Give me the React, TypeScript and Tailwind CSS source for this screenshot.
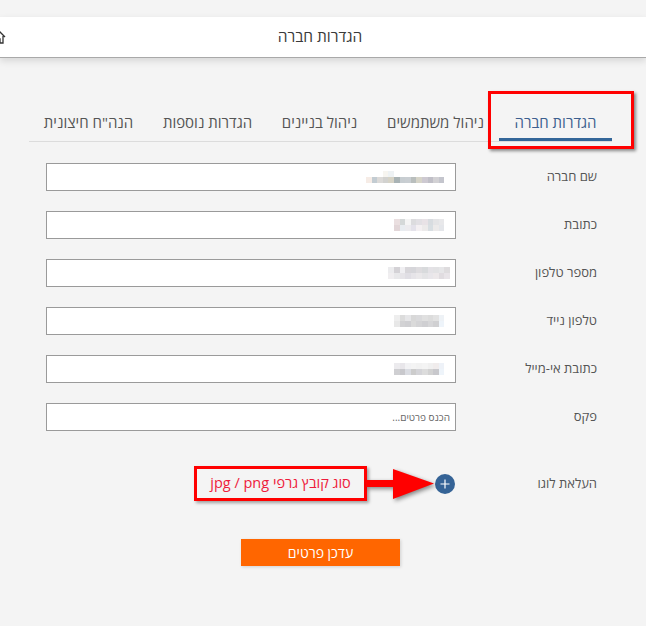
import React from "react";

const mosaics: { rows: string[][] }[] = [
  {
    rows: [
      ["transparent", "transparent", "transparent", "#f7f5f0", "#eef2f4", "transparent", "transparent", "transparent", "transparent", "transparent", "transparent", "transparent", "transparent", "transparent", "transparent"],
      ["#f6ece6", "#c3ccd2", "#dcdad8", "#d2d2d0", "#d6d3c6", "#a9b3b5", "#c7cdd1", "#c9ced2", "#b9bebd", "#d6d4c8", "#cdc9d1", "#c0bfc7", "#d2d1d4", "#c4c5cd", "transparent"],
    ],
  },
  {
    rows: [
      ["#eadfe0", "#d4d8d8", "#f4f4f4", "#dcdcde", "#e2e0e4", "#e8e2e6", "#d8dce0", "#e4e4e6", "#e8e8ea", "transparent"],
      ["#e2d6d8", "#e8ecf0", "#ecebee", "#e4e2ea", "#f4f0f2", "#eceaea", "#d8dee2", "#eceaea", "#e4e6ea", "transparent"],
    ],
  },
  {
    rows: [
      ["#ececee", "#d4d2d6", "#f0eff2", "#d8d6da", "#d6d6da", "#dedcdf", "#d8dadc", "#e4e2e6", "#e2e2e4", "#e6e6e8", "#dedcde"],
      ["#f0eef0", "#e8e8ea", "#e6e4e8", "#e0dee4", "#e6e4e8", "#eae8ea", "#e4e4e6", "#e8e6ea", "#ece8ea", "#e0dce0", "#e8e4e8"],
    ],
  },
  {
    rows: [
      ["#eeeeee", "#dcdcdc", "#e6e6e8", "#d8d8d8", "#dadadc", "#e0e0e0", "#dcdcdc", "#e2e2e2", "#eef2f6", "transparent"],
      ["#e8e8e8", "#d2d2d4", "#cfcfd2", "#dadada", "#d4d4d6", "#cfcfd2", "#d6d6d8", "#d0d0d2", "#eef4fa", "transparent"],
    ],
  },
  {
    rows: [
      ["#ecebee", "#e8e6ea", "#f2f2f4", "#f4f4f4", "#f2f2f2", "#f4f4f4", "#f0f0f0", "#f0ecec", "#eef2f8", "transparent"],
      ["#cfcfd2", "#c8c8cc", "#dadce2", "#cccccc", "#d4d4d8", "#dcdcdc", "#d2d2d2", "#c8c8cc", "#eef4fa", "transparent"],
    ],
  },
];

function Mosaic({ rows }: { rows: string[][] }) {
  return (
    <div className="flex flex-col" dir="ltr">
      {rows.map((r, i) => (
        <div key={i} className="flex">
          {r.map((c, j) => (
            <div key={j} className="w-[5.6px] h-[6px]" style={{ backgroundColor: c }} />
          ))}
        </div>
      ))}
    </div>
  );
}

const rows = [
  { label: "שם חברה", m: 0 },
  { label: "כתובת", m: 1 },
  { label: "מספר טלפון", m: 2 },
  { label: "טלפון נייד", m: 3 },
  { label: "כתובת אי-מייל", m: 4 },
  { label: "פקס", m: -1 },
];

const tabs = [
  { t: "הגדרות חברה", w: "w-[113px]" },
  { t: "ניהול משתמשים", w: "w-[127px]" },
  { t: "ניהול בניינים", w: "w-[105px]" },
  { t: "הגדרות נוספות", w: "w-[119px]" },
  { t: 'הנה"ח חיצונית', w: "w-[119px]" },
];

export default function App() {
  return (
    <div
      dir="rtl"
      className="relative w-[646px] h-[626px] bg-[#f4f4f4] overflow-hidden font-['Open_Sans','Liberation_Sans','DejaVu_Sans',sans-serif]"
    >
      {/* header */}
      <div className="mt-[17px] h-[41px] bg-white border-b border-[#a9a9a9] shadow-[0_3px_7px_rgba(0,0,0,0.12)] flex items-center justify-center relative">
        <span className="text-[15.5px] text-[#3a3a3a] mr-[6px]">הגדרות חברה</span>
        <svg className="absolute left-[-9px] top-[12px]" width="16" height="17" viewBox="0 0 16 17" fill="none" stroke="#333" strokeWidth="1.3">
          <path d="M2 8 L8 2 L14 8 M4 7 V14 H12 V7" />
          <path d="M7 14 V10 H9 V14" />
        </svg>
      </div>

      {/* tabs */}
      <div className="mt-[46px] mr-[34px] ml-[29px] flex border-b border-[#dcdcdc]">
        {tabs.map((x, i) => (
          <div
            key={x.t}
            className={
              i === 0
                ? `${x.w} shrink-0 whitespace-nowrap h-[37px] flex items-center justify-center text-[15px] text-[#3d5f8f] border-b-[3px] border-[#336699] pt-[3px]`
                : `${x.w} shrink-0 whitespace-nowrap h-[37px] flex items-center justify-center text-[15px] text-[#555]`
            }
          >
            {x.t}
          </div>
        ))}
      </div>

      {/* form */}
      <div className="mt-[21px] flex flex-col gap-[20px]">
        {rows.map((r) => (
          <div key={r.label} className="flex items-center h-[28px] pr-[49px] pl-[46px]">
            <div className="w-[141px] text-[13px] text-[#555] text-right">{r.label}</div>
            <div className="w-[410px] h-[28px] bg-white border border-[#9a9a9a] flex items-center justify-start pr-[5px]">
              {r.m >= 0 ? (
                <Mosaic rows={mosaics[r.m].rows} />
              ) : (
                <span className="text-[10px] text-[#666]">הכנס פרטים...</span>
              )}
            </div>
          </div>
        ))}
        <div className="flex items-center h-[28px] pr-[49px] pl-[46px] mt-[19px]">
          <div className="w-[141px] text-[13px] text-[#555] text-right">העלאת לוגו</div>
          <div className="w-[410px] h-[28px] flex items-center">
            <div className="w-[20px] h-[20px] rounded-full bg-[#356396] flex items-center justify-center mr-[1px]">
              <svg width="10" height="10" viewBox="0 0 10 10" stroke="white" strokeWidth="1.2">
                <path d="M5 0.5 V9.5 M0.5 5 H9.5" />
              </svg>
            </div>
          </div>
        </div>
      </div>

      {/* button */}
      <div dir="ltr" className="mt-[41px] pl-[241px]">
        <div className="w-[159px] h-[27px] bg-[#ff6600] shadow-[1px_1px_3px_rgba(0,0,0,0.15)] flex items-center justify-center text-white text-[14px]">
          עדכן פרטים
        </div>
      </div>

      {/* annotation: red box on tab */}
      <div className="absolute left-[488px] top-[91px] w-[146px] h-[58px] border-[3px] border-[#ff0000] shadow-[2px_2px_3px_rgba(0,0,0,0.45)]" />

      {/* annotation: note box */}
      <div className="absolute left-[194px] top-[466px] w-[173px] h-[35px] border-[3px] border-[#ff0000] shadow-[2px_2px_3px_rgba(0,0,0,0.35)] flex items-center justify-center">
        <span className="text-[14.5px] text-[#ee1c3c] leading-none whitespace-nowrap">סוג קובץ גרפי jpg / png</span>
      </div>

      {/* annotation: arrow */}
      <svg className="absolute left-[366px] top-[467px] drop-shadow-[2px_2px_2px_rgba(0,0,0,0.45)]" width="72" height="34" viewBox="0 0 72 34">
        <rect x="0" y="13" width="30" height="7" fill="#ff0000" />
        <path d="M27 2 L68 16.5 L27 32 Z" fill="#ff0000" />
      </svg>
    </div>
  );
}
